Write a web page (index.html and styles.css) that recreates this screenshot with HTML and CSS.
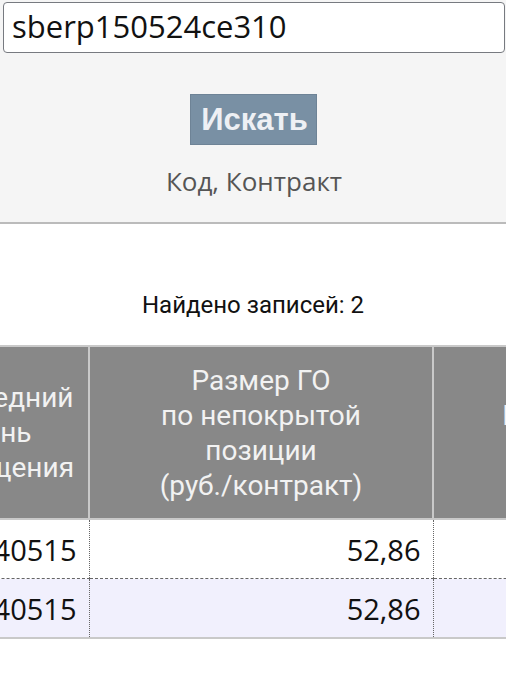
FILE: index.html
```html
<!DOCTYPE html>
<html lang="ru">
<head>
<meta charset="utf-8">
<link rel="stylesheet" href="styles.css">
</head>
<body>
<div class="search">
  <div class="field">sberp150524ce310</div>
  <div class="actions"><button class="btn" type="button">Искать</button></div>
  <div class="hint">Код, Контракт</div>
</div>
<div class="found">Найдено записей: 2</div>
<div class="table-wrap">
  <table class="grid">
    <thead>
      <tr>
        <th class="c1">Последний<br>день<br>обращения</th>
        <th class="c2">Размер ГО<br>по непокрытой<br>позиции<br>(руб./контракт)</th>
        <th class="c3">Наименование<br>актива</th>
      </tr>
    </thead>
    <tbody>
      <tr>
        <td class="c1">20240515</td>
        <td class="c2">52,86</td>
        <td class="c3"></td>
      </tr>
      <tr class="alt">
        <td class="c1">20240515</td>
        <td class="c2">52,86</td>
        <td class="c3"></td>
      </tr>
    </tbody>
  </table>
</div>
</body>
</html>
```
FILE: styles.css
```css
html, body {
  margin: 0;
  padding: 0;
  background: #ffffff;
  overflow: hidden;
}
body {
  width: 506px;
  font-family: "Open Sans", "Noto Sans", sans-serif;
  color: #111;
}
.search {
  background: #f5f5f5;
  border-bottom: 2px solid #bbbbbb;
  padding: 2px 1px 0 3px;
  box-sizing: border-box;
  height: 224px;
}
.field {
  height: 51px;
  box-sizing: border-box;
  border: 1.5px solid #777a80;
  border-radius: 4px;
  background: #fff;
  font-family: "Open Sans", sans-serif;
  font-size: 31px;
  line-height: 46px;
  padding-left: 8px;
  color: #111;
  white-space: nowrap;
}
.actions {
  display: flex;
  justify-content: center;
  padding-top: 41px;
  padding-right: 1px;
}
.btn {
  background: #7990a4;
  border: 1px solid #6e8396;
  color: #eef0f4;
  font-family: "Liberation Sans", Arial, sans-serif;
  font-weight: bold;
  font-size: 31px;
  height: 51px;
  width: 127px;
  padding: 0 0 0 2px;
  margin: 0;
}
.hint {
  text-align: center;
  color: #555;
  font-size: 26px;
  line-height: 35px;
  padding-top: 19px;
  padding-left: 0;
}
.found {
  text-align: center;
  font-family: Roboto, sans-serif;
  font-size: 24px;
  line-height: 28px;
  color: #111;
  margin-top: 67px;
  margin-bottom: 26px;
}
.table-wrap {
  width: 506px;
  overflow: hidden;
}
.grid {
  border-collapse: collapse;
  margin-left: -90px;
  table-layout: fixed;
  width: 856px;
}
.grid th {
  background: #888888;
  color: #f2f2f2;
  font-family: Roboto, sans-serif;
  font-weight: normal;
  font-size: 28px;
  line-height: 35px;
  height: 171px;
  padding: 0;
  border: 2px solid #c9c9c9;
  text-align: center;
  vertical-align: middle;
  white-space: nowrap;
}
.grid th.c1 { width: 176px; }
.grid th.c2 { width: 342px; }
.grid th.c3 { width: 334px; }
.grid td {
  font-size: 29px;
  text-align: right;
  padding: 0 12px 0 0;
  height: 58px;
  border-left: 1px dotted #666;
  border-right: 1px dotted #666;
  border-top: 1px dashed #666;
  color: #111;
  white-space: nowrap;
}
.grid tbody tr:first-child td { border-top: 2px solid #c9c9c9; }
.grid tbody tr:last-child td { border-bottom: 2px solid #c9c9c9; }
.grid tr.alt td { background: #f1f0fd; }
```
